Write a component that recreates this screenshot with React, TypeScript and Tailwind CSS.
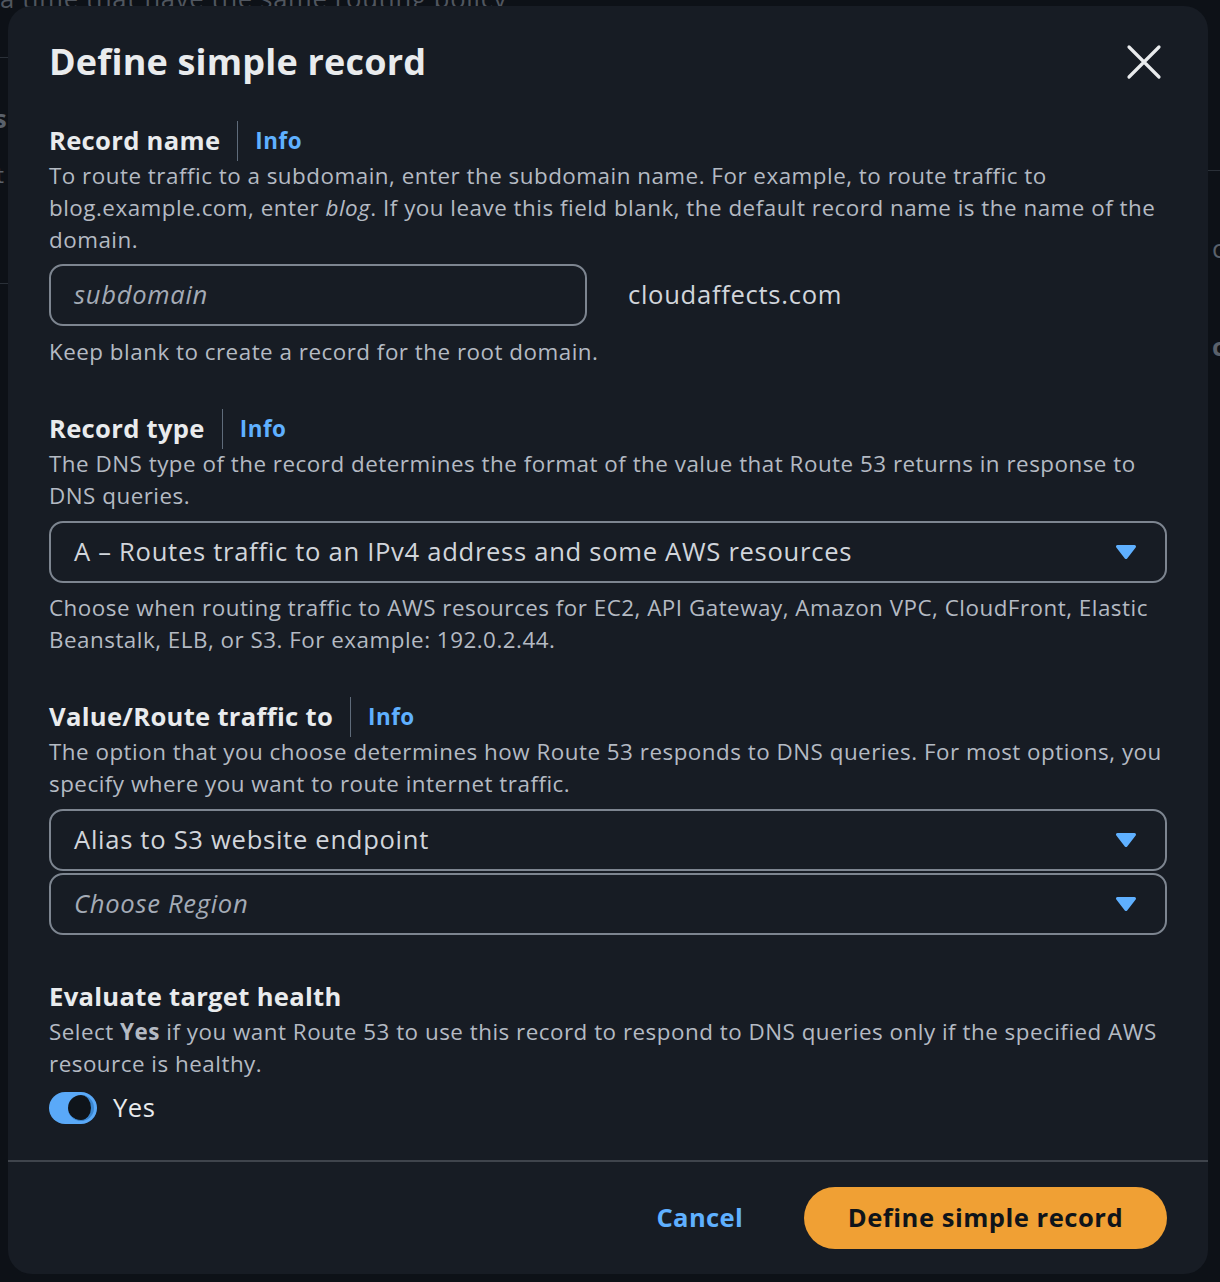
import React from "react";

function Label({ text }: { text: string }) {
  return (
    <div className="flex items-center h-[38px]">
      <span className="text-[25.6px] font-bold text-[#e9ebed] leading-[38px] tracking-[0.3px]">{text}</span>
      <span className="mx-[17px] w-px h-[40px] bg-[#5f6b7a]" />
      <span className="text-[22.4px] font-bold text-[#5fb0ff] leading-[38px]">Info</span>
    </div>
  );
}

function Caret() {
  return (
    <svg width="22" height="16" viewBox="0 0 22 16" className="shrink-0">
      <path d="M2.5 2.5 L19.5 2.5 L11 13.5 Z" fill="#5fb0ff" stroke="#5fb0ff" strokeWidth="3" strokeLinejoin="round" />
    </svg>
  );
}

function Select({ text, italic }: { text: string; italic?: boolean }) {
  return (
    <div className="h-[62px] rounded-[14px] border-2 border-[#7d8590] flex items-center justify-between pl-[23px] pr-[28px]">
      <span className={italic ? "text-[25.6px] tracking-[0.7px] italic text-[#a4abb6]" : "text-[25.6px] tracking-[0.7px] text-[#d1d5db]"}>{text}</span>
      <Caret />
    </div>
  );
}

export default function App() {
  return (
    <div className="relative w-[1220px] h-[1282px] overflow-hidden bg-[#0d1117] font-['Open_Sans',sans-serif]">
      <div className="absolute left-0 top-[-20px] text-[25.6px] tracking-[0.7px] text-[#50565f] whitespace-nowrap">a time that have the same routing policy</div>
      <div className="absolute left-0 top-[57px] w-[8px] h-px bg-[#2a3038]" />
      <div className="absolute left-[-6px] top-[100px] text-[25.6px] font-bold text-[#5a616b]">s</div>
      <div className="absolute left-[-4px] top-[158px] text-[22.4px] text-[#5a616b]">t</div>
      <div className="absolute right-0 top-[170px] w-[12px] h-px bg-[#2a3038]" />
      <div className="absolute left-[1212px] top-[230px] text-[25.6px] text-[#5a616b]">c</div>
      <div className="absolute left-[1212px] top-[328px] text-[25.6px] font-bold text-[#5a616b]">c</div>
      <div className="absolute left-0 top-[283px] w-[8px] h-px bg-[#2a3038]" />

      <div className="relative pt-[6px] pl-[8px] pr-[12px]">
        <div className="h-[1268px] rounded-[24px] bg-[#171c24] flex flex-col">
          <div className="flex items-center justify-between pl-[41px] pr-[46px] pt-[32px] h-[80px]">
            <h1 className="text-[36px] font-bold text-[#e9ebed] leading-[48px] tracking-[0.2px]">Define simple record</h1>
            <svg width="36" height="36" viewBox="0 0 36 36">
              <path d="M3 3 L33 33 M33 3 L3 33" stroke="#e9ebed" strokeWidth="3.2" strokeLinecap="round" />
            </svg>
          </div>

          <div className="flex flex-col px-[41px] pt-[36px] text-[22.4px] leading-[32px] tracking-[0.5px] text-[#b4bac3]">
            <Label text="Record name" />
            <p>
              To route traffic to a subdomain, enter the subdomain name. For example, to route traffic to
              <br />
              blog.example.com, enter <i>blog</i>. If you leave this field blank, the default record name is the name of the
              <br />
              domain.
            </p>
            <div className="flex items-center mt-[8px]">
              <div className="w-[538px] h-[62px] rounded-[14px] border-2 border-[#7d8590] flex items-center pl-[23px]">
                <span className="text-[25.6px] tracking-[0.7px] italic text-[#a4abb6]">subdomain</span>
              </div>
              <span className="ml-[41px] text-[25.6px] tracking-[0.7px] text-[#d1d5db]">cloudaffects.com</span>
            </div>
            <p className="mt-[10px]">Keep blank to create a record for the root domain.</p>

            <div className="mt-[42px]">
              <Label text="Record type" />
            </div>
            <p>
              The DNS type of the record determines the format of the value that Route 53 returns in response to
              <br />
              DNS queries.
            </p>
            <div className="mt-[9px]">
              <Select text="A – Routes traffic to an IPv4 address and some AWS resources" />
            </div>
            <p className="mt-[9px]">
              Choose when routing traffic to AWS resources for EC2, API Gateway, Amazon VPC, CloudFront, Elastic
              <br />
              Beanstalk, ELB, or S3. For example: 192.0.2.44.
            </p>

            <div className="mt-[42px]">
              <Label text="Value/Route traffic to" />
            </div>
            <p>
              The option that you choose determines how Route 53 responds to DNS queries. For most options, you
              <br />
              specify where you want to route internet traffic.
            </p>
            <div className="mt-[9px] flex flex-col gap-[2px]">
              <Select text="Alias to S3 website endpoint" />
              <Select text="Choose Region" italic />
            </div>

            <div className="mt-[43px] h-[38px] flex items-center">
              <span className="text-[25.6px] font-bold text-[#e9ebed] tracking-[0.3px]">Evaluate target health</span>
            </div>
            <p>
              Select <b>Yes</b> if you want Route 53 to use this record to respond to DNS queries only if the specified AWS
              <br />
              resource is healthy.
            </p>
            <div className="mt-[12px] h-[32px] flex items-center gap-[16px]">
              <div className="w-[48px] h-[32px] rounded-full bg-[#5aa9f8] flex items-center justify-end pr-[3px]">
                <div className="w-[26px] h-[26px] rounded-full bg-[#0f141a] border-r-[3px] border-b border-[#3a86d0]" />
              </div>
              <span className="text-[25.6px] text-[#e9ebed]">Yes</span>
            </div>
          </div>

          <div className="mt-[36px] h-[2px] bg-[#3f444c]" />

          <div className="flex items-center justify-end pr-[41px] pt-[25px] gap-[61px]">
            <span className="text-[25.6px] font-bold text-[#5fb0ff] tracking-[0.3px]">Cancel</span>
            <div className="h-[62px] w-[363px] rounded-full bg-[#f0a034] flex items-center justify-center">
              <span className="text-[25.6px] font-bold text-[#0f141a] tracking-[0.5px]">Define simple record</span>
            </div>
          </div>
        </div>
      </div>
    </div>
  );
}
